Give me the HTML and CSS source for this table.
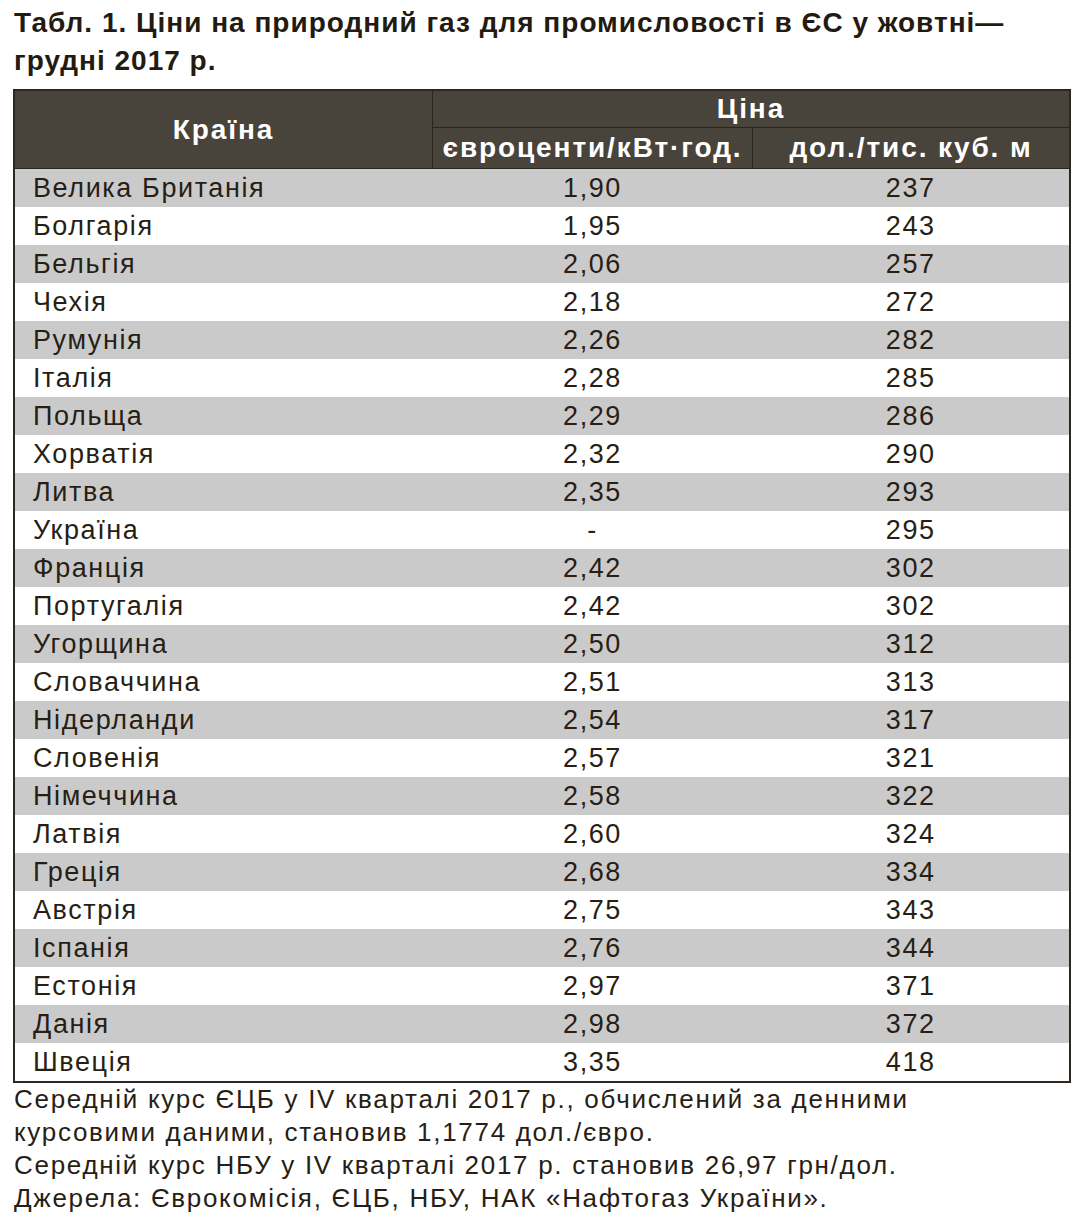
FILE: index.html
```html
<!DOCTYPE html>
<html lang="uk">
<head>
<meta charset="utf-8">
<title>Табл. 1</title>
<link rel="stylesheet" href="styles.css">
</head>
<body>
<div class="page">
  <h1 class="title">Табл. 1. Ціни на природний газ для промисловості в ЄС у жовтні—<br>грудні 2017 р.</h1>
  <table class="prices">
    <thead>
      <tr>
        <th class="h-country" rowspan="2">Країна</th>
        <th class="h-price" colspan="2">Ціна</th>
      </tr>
      <tr>
        <th class="h-sub h-eur">євроценти/кВт·год.</th>
        <th class="h-sub h-usd">дол./тис. куб. м</th>
      </tr>
    </thead>
    <tbody>
      <tr><td>Велика Британія</td><td>1,90</td><td>237</td></tr>
      <tr><td>Болгарія</td><td>1,95</td><td>243</td></tr>
      <tr><td>Бельгія</td><td>2,06</td><td>257</td></tr>
      <tr><td>Чехія</td><td>2,18</td><td>272</td></tr>
      <tr><td>Румунія</td><td>2,26</td><td>282</td></tr>
      <tr><td>Італія</td><td>2,28</td><td>285</td></tr>
      <tr><td>Польща</td><td>2,29</td><td>286</td></tr>
      <tr><td>Хорватія</td><td>2,32</td><td>290</td></tr>
      <tr><td>Литва</td><td>2,35</td><td>293</td></tr>
      <tr><td>Україна</td><td>-</td><td>295</td></tr>
      <tr><td>Франція</td><td>2,42</td><td>302</td></tr>
      <tr><td>Португалія</td><td>2,42</td><td>302</td></tr>
      <tr><td>Угорщина</td><td>2,50</td><td>312</td></tr>
      <tr><td>Словаччина</td><td>2,51</td><td>313</td></tr>
      <tr><td>Нідерланди</td><td>2,54</td><td>317</td></tr>
      <tr><td>Словенія</td><td>2,57</td><td>321</td></tr>
      <tr><td>Німеччина</td><td>2,58</td><td>322</td></tr>
      <tr><td>Латвія</td><td>2,60</td><td>324</td></tr>
      <tr><td>Греція</td><td>2,68</td><td>334</td></tr>
      <tr><td>Австрія</td><td>2,75</td><td>343</td></tr>
      <tr><td>Іспанія</td><td>2,76</td><td>344</td></tr>
      <tr><td>Естонія</td><td>2,97</td><td>371</td></tr>
      <tr><td>Данія</td><td>2,98</td><td>372</td></tr>
      <tr><td>Швеція</td><td>3,35</td><td>418</td></tr>
    </tbody>
  </table>
  <div class="notes">
    <p>Середній курс ЄЦБ у IV кварталі 2017 р., обчислений за денними<br>курсовими даними, становив 1,1774 дол./євро.</p>
    <p>Середній курс НБУ у IV кварталі 2017 р. становив 26,97 грн/дол.</p>
    <p>Джерела: Єврокомісія, ЄЦБ, НБУ, НАК «Нафтогаз України».</p>
  </div>
</div>
</body>
</html>
```
FILE: styles.css
```css
html, body {
  margin: 0;
  padding: 0;
  background: #ffffff;
}
body {
  font-family: "Liberation Sans", Arial, sans-serif;
  color: #271e14;
}
.page {
  padding: 4px 8px 0 13px;
}
.title {
  margin: 0 0 9px 1px;
  font-size: 28px;
  line-height: 38px;
  font-weight: 700;
  letter-spacing: 1px;
  color: #231a10;
}
.prices {
  width: 1058px;
  border-collapse: collapse;
  border: 2px solid #2e271f;
  font-size: 27px;
  letter-spacing: 1.6px;
}
.prices thead th {
  background: #48433b;
  color: #ffffff;
  font-weight: 700;
  font-size: 28px;
  letter-spacing: 1.9px;
  padding: 0;
  border: 1px solid #2b251e;
}
.h-country {
  width: 417px;
  height: 77px;
}
.h-price {
  height: 35px;
  padding-top: 2px;
  vertical-align: middle;
}
.h-sub {
  height: 38px;
  vertical-align: middle;
  padding-top: 2px;
}
.h-eur {
  width: 319px;
}
.prices tbody td {
  height: 38px;
  padding: 0;
  text-align: center;
  vertical-align: middle;
  line-height: 38px;
}
.prices tbody td:first-child {
  text-align: left;
  padding-left: 18px;
}
.prices tbody tr:nth-child(odd) td {
  background: #cbcacb;
}
.notes {
  margin-top: 0;
  font-size: 26px;
  line-height: 33px;
  letter-spacing: 1.7px;
}
.notes p {
  margin: 0 0 0 1px;
}
```
